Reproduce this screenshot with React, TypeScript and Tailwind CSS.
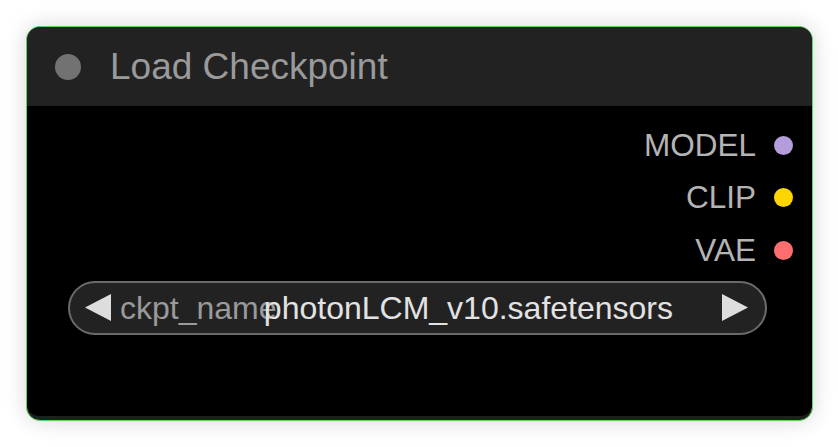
const outputs = [
  { name: 'MODEL', color: '#b39ddb' },
  { name: 'CLIP', color: '#ffd500' },
  { name: 'VAE', color: '#ff6e6e' },
];

const NodeHeader = () => (
  <div className="flex h-[79px] items-center bg-[#222222] pl-[28px]">
    <span className="h-[26px] w-[26px] rounded-full bg-[#727272]" />
    <span className="ml-[29px] text-[37px] leading-none text-[#9a9a9a]">Load Checkpoint</span>
  </div>
);

const OutputRow = ({ name, color }: { name: string; color: string }) => (
  <div className="flex h-[52.5px] items-center justify-end pr-[19px]">
    <span className="text-[31.5px] leading-none text-[#b4b4b4]">{name}</span>
    <span className="ml-[18px] h-[19px] w-[19px] rounded-full" style={{ backgroundColor: color }} />
  </div>
);

const ComboWidget = () => (
  <div className="ml-[41px] mr-[45px] mt-[4px] flex h-[54px] items-center rounded-full border-2 border-[#6a6a6a] bg-[#222222] pl-[15px] pr-[17px]">
    <svg width="27" height="27" viewBox="0 0 27 27" className="shrink-0">
      <polygon points="0,13.5 26,0 26,27" fill="#dddddd" />
    </svg>
    <div className="relative ml-[8px] flex-1 self-stretch">
      <span className="absolute left-0 top-1/2 -translate-y-1/2 whitespace-nowrap text-[32px] leading-none text-[#9a9a9a]">
        ckpt_name
      </span>
      <span className="absolute right-[48px] top-1/2 -translate-y-1/2 whitespace-nowrap text-[32px] leading-none text-[#e2e2e2]">
        photonLCM_v10.safetensors
      </span>
    </div>
    <svg width="27" height="27" viewBox="0 0 27 27" className="shrink-0">
      <polygon points="27,13.5 1,0 1,27" fill="#dddddd" />
    </svg>
  </div>
);

export default function App() {
  return (
    <div className="h-[447px] w-[838px] bg-white pl-[26px] pt-[26px]" style={{ fontFamily: '"Liberation Sans", Arial, sans-serif' }}>
      <div className="flex h-[395px] w-[787px] flex-col overflow-hidden rounded-[14px] border border-[#5fd35f] bg-[#1f1f1f] shadow-[0_0_22px_rgba(0,0,0,0.16)]">
        <NodeHeader />
        <div className="mb-[4px] flex-1 rounded-b-[12px] bg-black pt-[13px]">
          {outputs.map((o) => (
            <OutputRow key={o.name} name={o.name} color={o.color} />
          ))}
          <ComboWidget />
        </div>
      </div>
    </div>
  );
}
